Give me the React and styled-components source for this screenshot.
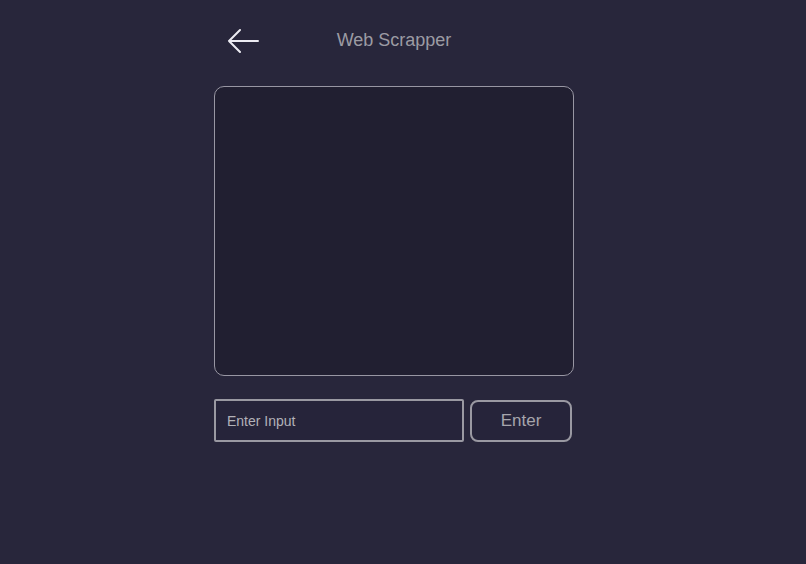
import styled, { createGlobalStyle } from 'styled-components';

const GlobalStyle = createGlobalStyle`
  html, body {
    margin: 0;
    padding: 0;
    background: #28263b;
    font-family: "Liberation Sans", Arial, sans-serif;
  }
`;

const Page = styled.div`
  width: 360px;
  margin-left: 214px;
  padding-top: 27px;
  display: flex;
  flex-direction: column;
`;

const Header = styled.div`
  position: relative;
  height: 27px;
  display: flex;
  align-items: center;
  justify-content: center;
`;

const BackButton = styled.button`
  position: absolute;
  left: 13px;
  top: 1px;
  padding: 0;
  border: none;
  background: none;
  width: 32px;
  height: 26px;
  cursor: pointer;
  display: flex;
`;

const Title = styled.h1`
  margin: 0;
  font-size: 18px;
  font-weight: 400;
  color: #9c9ba3;
`;

const Output = styled.div`
  margin-top: 32px;
  height: 288px;
  border: 1px solid #9896a3;
  border-radius: 10px;
  background: #211f31;
`;

const Form = styled.form`
  margin-top: 23px;
  display: flex;
  gap: 6px;
  align-items: flex-start;
`;

const Input = styled.input`
  box-sizing: border-box;
  width: 250px;
  height: 43px;
  padding: 0 11px;
  border: 2px solid #9a99a2;
  border-radius: 2px;
  background: #26243a;
  color: #c8c7cd;
  font-family: inherit;
  font-size: 14px;
  outline: none;

  &::placeholder {
    color: #b2b1b8;
  }
`;

const Submit = styled.button`
  box-sizing: border-box;
  width: 102px;
  height: 42px;
  margin-top: 1px;
  border: 2px solid #9a99a2;
  border-radius: 8px;
  background: #26243a;
  color: #a6a5ac;
  font-family: inherit;
  font-size: 17px;
  cursor: pointer;
`;

export default function App() {
  return (
    <>
      <GlobalStyle />
      <Page>
        <Header>
          <BackButton type="button" aria-label="Back">
            <svg width="32" height="26" viewBox="0 0 32 26" fill="none">
              <path d="M31 13H2M13 2L2 13l11 11" stroke="#ecebf2" strokeWidth="2" strokeLinecap="round" strokeLinejoin="round" />
            </svg>
          </BackButton>
          <Title>Web Scrapper</Title>
        </Header>
        <Output />
        <Form onSubmit={(e) => e.preventDefault()}>
          <Input placeholder="Enter Input" />
          <Submit type="submit">Enter</Submit>
        </Form>
      </Page>
    </>
  );
}
